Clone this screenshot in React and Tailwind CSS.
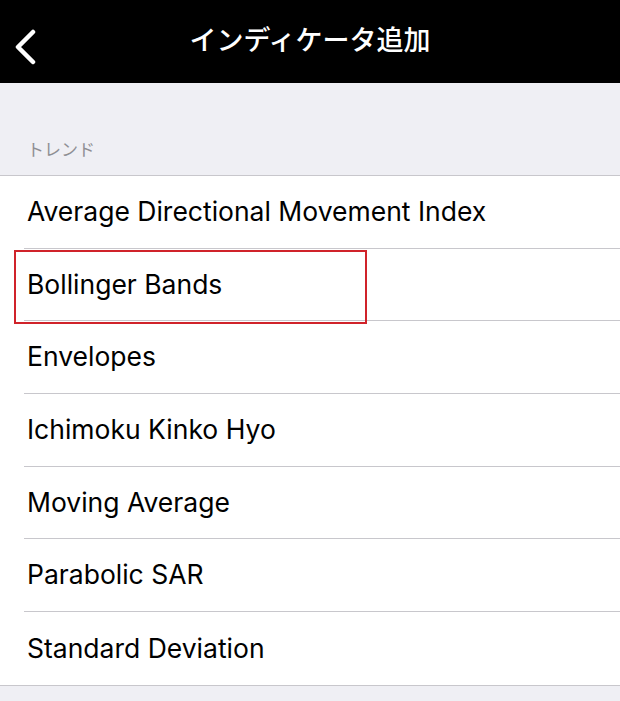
import React from 'react';

const items = [
  'Average Directional Movement Index',
  'Bollinger Bands',
  'Envelopes',
  'Ichimoku Kinko Hyo',
  'Moving Average',
  'Parabolic SAR',
  'Standard Deviation',
];

export default function App() {
  return (
    <div
      className="w-[620px] h-[701px] bg-[#efeff4] overflow-hidden"
      style={{ fontFamily: 'Inter, "Noto Sans CJK JP", sans-serif' }}
    >
      {/* Header */}
      <div className="relative h-[83px] bg-black flex items-center justify-center">
        <svg className="absolute left-[12px] top-[29px]" width="26" height="36" viewBox="0 0 26 36" fill="none">
          <path d="M21 3 L6 18 L21 33" stroke="white" strokeWidth="4.5" strokeLinecap="round" strokeLinejoin="round" />
        </svg>
        <h1 className="text-white text-[27px] font-medium">インディケータ追加</h1>
      </div>

      {/* Section header */}
      <div className="h-[92px] flex items-end pb-[12px] pl-[27px]">
        <span className="text-[#8e8e93] text-[17px]">トレンド</span>
      </div>

      {/* List */}
      <div className="bg-white border-y border-[#c8c7cc]">
        {items.map((item, i) => (
          <div key={item} className="relative pl-[24px] h-[72.7px]">
            <div
              className={`h-full flex items-center pl-[3px] ${i < items.length - 1 ? 'border-b border-[#c8c7cc]' : ''}`}
            >
              <span className="text-black text-[26.5px]">{item}</span>
            </div>
            {item === 'Bollinger Bands' && (
              <div className="absolute left-[14px] top-[1px] w-[353px] h-[74px] border-[2px] border-[#d0232a]" />
            )}
          </div>
        ))}
      </div>
    </div>
  );
}
